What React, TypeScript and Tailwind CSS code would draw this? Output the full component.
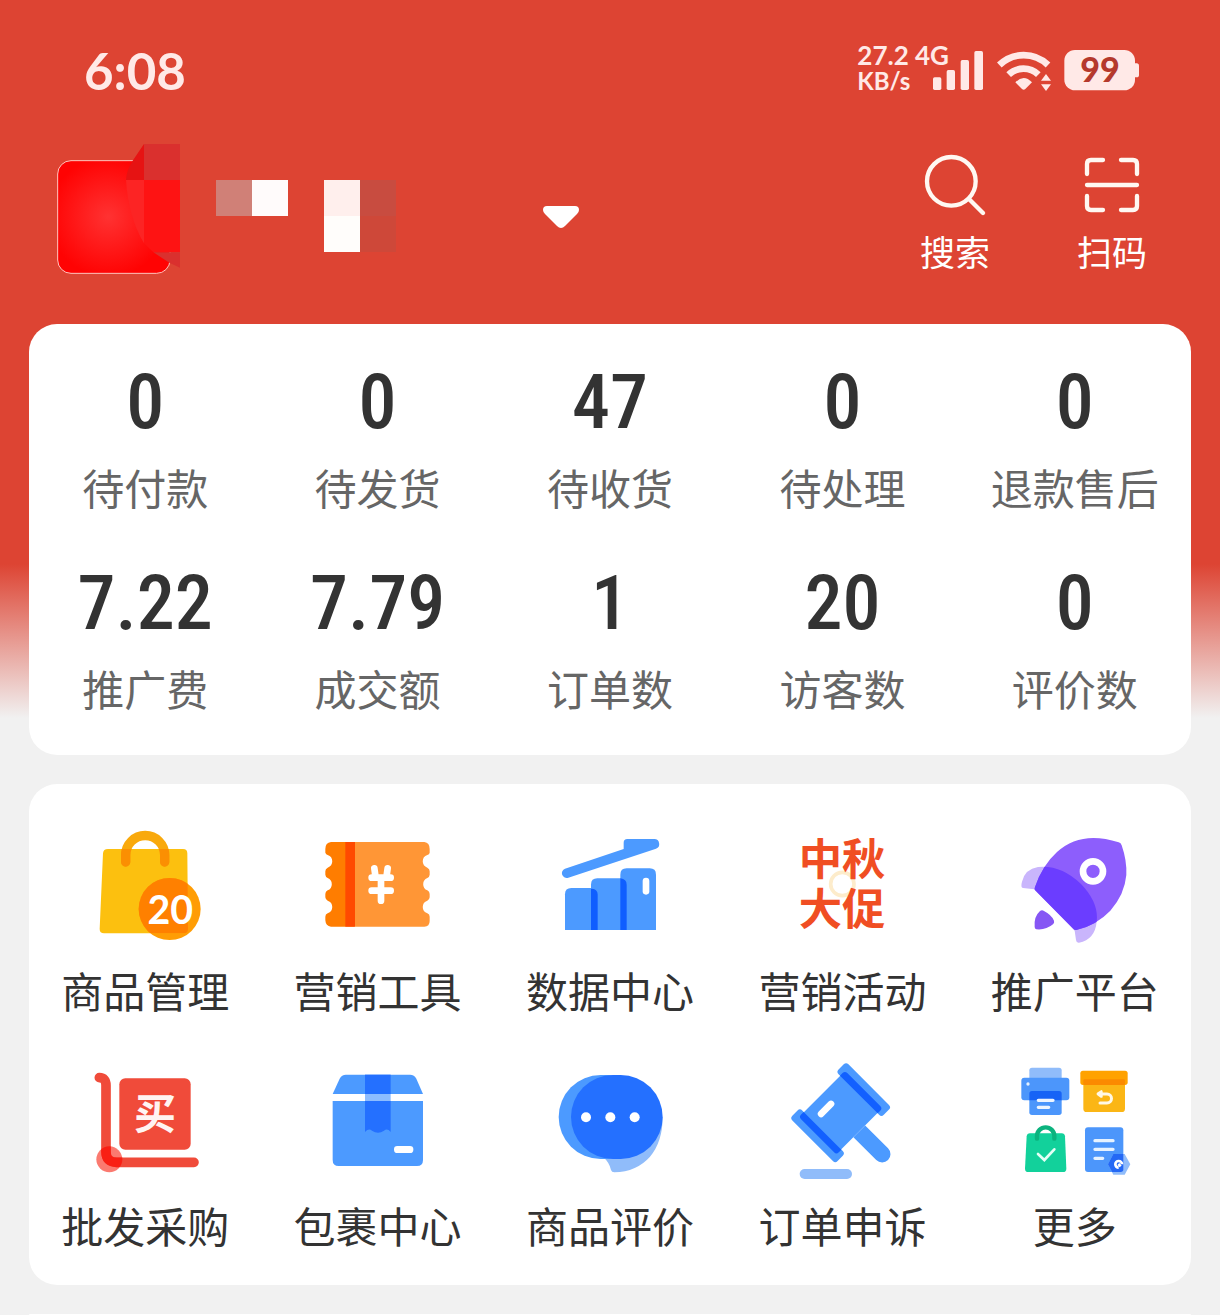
import type { ReactNode } from 'react';

interface Stat {
  value: string;
  label: string;
}

interface Tool {
  label: string;
  icon: ReactNode;
}

const stats: Stat[] = [
  { value: '0', label: '待付款' },
  { value: '0', label: '待发货' },
  { value: '47', label: '待收货' },
  { value: '0', label: '待处理' },
  { value: '0', label: '退款售后' },
  { value: '7.22', label: '推广费' },
  { value: '7.79', label: '成交额' },
  { value: '1', label: '订单数' },
  { value: '20', label: '访客数' },
  { value: '0', label: '评价数' },
];

function BagIcon() {
  const body = 'M205 117 H430 Q443 117 443 130 L445 357 Q445 370 432 370 H193 Q180 370 180 357 L190 130 Q191 117 205 117Z';
  return (
    <svg viewBox="136 48 360 360" className="size-[120px]" aria-hidden="true">
      <clipPath id="bag-body"><path d={body} /></clipPath>
      <path d={body} fill="#fcc00f" />
      <path d="M258 156 V135 a58 58 0 0 1 117 0 V156" fill="none" stroke="#f9a90c" strokeWidth="28" strokeLinecap="round" />
      <circle cx="390" cy="297" r="93" fill="#ff9d05" />
      <g clipPath="url(#bag-body)">
        <path d="M258 156 V135 a58 58 0 0 1 117 0 V156" fill="none" stroke="#fb8f02" strokeWidth="28" strokeLinecap="round" />
        <circle cx="390" cy="297" r="93" fill="#ff8000" />
      </g>
      <text x="392" y="343" textAnchor="middle" fontSize="118" className="fill-white font-[Lato] font-bold">20</text>
    </svg>
  );
}

function TicketIcon() {
  return (
    <svg viewBox="83 48 360 360" className="size-[120px]" aria-hidden="true">
      <path d="M193 96 H122 Q105 98 105 117 V128 Q107 134 112 135 A20 20 0 0 1 112 173 Q105 176 105 184 V194 Q106 202 112 204 A20 20 0 0 1 112 241 Q105 244 105 252 V262 Q106 270 112 272 A20 20 0 0 1 112 310 Q105 313 105 320 V331 Q106 348 122 350 H193Z" fill="#ff7d00" />
      <path d="M193 96 H402 Q418 98 418 117 V128 Q417 134 411 135 A20 20 0 0 0 411 173 Q418 176 418 184 V194 Q417 202 411 204 A20 20 0 0 0 411 241 Q418 244 418 252 V262 Q417 270 411 272 A20 20 0 0 0 411 310 Q418 313 418 320 V333 Q418 350 402 350 H193Z" fill="#ff9636" />
      <rect x="165" y="96" width="29" height="254" fill="#ff4a00" />
      <path d="M252 175 L256 203 M292 175 L288 203 M244 203 H301 M244 242 H301 M272 203 V272" fill="none" stroke="#fff" strokeWidth="20" strokeLinecap="round" />
    </svg>
  );
}

function ChartIcon() {
  return (
    <svg viewBox="210 48 360 360" className="size-[120px]" aria-hidden="true">
      <g fill="#4c9aff">
        <path d="M255 176 L431 117 V98 Q431 87 442 87 H523 A15 15 0 0 1 528 116 L265 203 A14 14 0 0 1 255 176Z" />
        <path d="M255 360 V253 Q255 234 274 234 H334 Q353 234 353 253 V360Z" />
        <path d="M333 360 V224 Q333 205 352 205 H421 Q440 205 440 224 V360Z" />
        <path d="M421 360 V194 Q421 175 440 175 H509 Q528 175 528 194 V360Z" />
      </g>
      <path d="M333 360 V236 Q353 236 353 253 V360Z M421 360 V205 Q440 207 440 224 V360Z" fill="#0f5eff" />
      <rect x="488" y="203" width="20" height="51" rx="10" fill="#fff" />
    </svg>
  );
}

function FestivalIcon() {
  return (
    <svg viewBox="127 48 360 360" className="size-[120px]" aria-hidden="true">
      <circle cx="308" cy="222" r="35" fill="none" stroke="#fdeccb" strokeWidth="11" />
      <g fontSize="130" className="fill-[#f04e23] font-['Noto_Sans_CJK_SC'] font-bold">
        <text x="177" y="196">中秋</text>
        <text x="177" y="345">大促</text>
      </g>
    </svg>
  );
}

function RocketIcon() {
  const hull = 'M1135 97 Q1142 99 1144 106 Q1160 152 1158 195 Q1153 253 1110 302 Q1068 346 1008 360 Q1003 361 999 356 L884 241 Q881 238 884 231 Q906 166 950 126 Q1022 60 1135 97Z';
  const fins = 'M848 234 Q840 233 845 215 Q854 177 893 171 Q962 164 1022 222 Q1076 278 1069 335 Q1064 388 1016 398 Q1008 399 1007 390 L1003 362 L882 238Z';
  return (
    <svg viewBox="824 48 360 360" className="size-[120px]" aria-hidden="true">
      <clipPath id="rocket-hull"><path d={hull} /></clipPath>
      <path d={fins} fill="#c9b5fc" />
      <path d={hull} fill="#8d5efc" />
      <path d={fins} fill="#6b3dff" clipPath="url(#rocket-hull)" />
      <circle cx="1058" cy="184" r="30" fill="#8d5efc" stroke="#fff" strokeWidth="20" />
      <path d="M899 303 Q905 299 911 303 Q934 315 941 332 Q943 338 938 343 Q917 361 888 358 Q883 357 883 351 Q880 320 899 303Z" fill="#8656f4" />
    </svg>
  );
}

function TrolleyIcon() {
  return (
    <svg viewBox="76 63 360 360" className="size-[120px]" aria-hidden="true">
      <clipPath id="trolley-wheel"><circle cx="149" cy="358" r="39" /></clipPath>
      <circle cx="149" cy="358" r="39" fill="#fb7a70" />
      <g fill="none" strokeWidth="29" strokeLinecap="round">
        <path d="M119 113 Q139 113 139 136 V335 Q139 367 171 367 H403" stroke="#f04b3a" />
        <path d="M139 300 V335 Q139 367 171 367 H220" stroke="#f91f14" clipPath="url(#trolley-wheel)" />
      </g>
      <rect x="179" y="115" width="214" height="214" rx="18" fill="#f04b3a" />
      <text x="286" y="268" textAnchor="middle" fontSize="126" className="fill-[#fff4f2] font-['Noto_Sans_CJK_SC'] font-bold">买</text>
    </svg>
  );
}

function ParcelIcon() {
  return (
    <svg viewBox="773 63 360 360" className="size-[120px]" aria-hidden="true">
      <path d="M817 162 L838 116 Q844 104 857 104 H1049 Q1062 104 1068 116 L1088 162Z" fill="#4c9aff" />
      <path d="M817 183 H1088 V360 Q1088 378 1070 378 H835 Q817 378 817 360Z" fill="#4c9aff" />
      <rect x="914" y="104" width="77" height="58" fill="#2470ff" />
      <rect x="914" y="162" width="77" height="21" fill="#8dbcff" />
      <path d="M914 183 H991 V276 Q981 264 971 272 Q953 284 935 272 Q925 264 914 276Z" fill="#2470ff" />
      <rect x="1001" y="318" width="58" height="21" rx="10" fill="#fff" />
    </svg>
  );
}

function ChatIcon() {
  return (
    <svg viewBox="90 63 360 360" className="size-[120px]" aria-hidden="true">
      <path d="M248 350 Q268 366 273 390 Q275 397 283 397 Q350 395 390 350 Q428 305 428 231 L300 300Z" fill="#90bcfa" />
      <rect x="116" y="105" width="276" height="252" rx="126" fill="#4c9aff" />
      <rect x="153" y="105" width="275" height="252" rx="126" fill="#2470ff" />
      <g fill="#fff">
        <circle cx="198" cy="232" r="15" />
        <circle cx="271" cy="232" r="15" />
        <circle cx="344" cy="232" r="15" />
      </g>
    </svg>
  );
}

function GavelIcon() {
  return (
    <svg viewBox="787 63 360 360" className="size-[120px]" aria-hidden="true">
      <g transform="translate(963 218) rotate(-45)">
        <g fill="#4c9aff">
          <rect x="-98" y="-79" width="196" height="158" rx="8" />
          <rect x="77" y="-96" width="42" height="192" rx="10" />
          <rect x="-119" y="-96" width="42" height="192" rx="10" />
          <path d="M-25 79 H25 V176 A25 25 0 0 1 -25 176Z" />
        </g>
        <path d="M77 -80 H88 Q98 -80 98 -70 V70 Q98 80 88 80 H77Z M-77 -80 H-88 Q-98 -80 -98 -70 V70 Q-98 80 -88 80 H-77Z" fill="#1260ff" />
        <rect x="-54" y="-49" width="62" height="20" rx="10" fill="#fff" />
      </g>
      <rect x="840" y="387" width="157" height="30" rx="15" fill="#90bcfa" />
    </svg>
  );
}

function MoreIcon() {
  return (
    <svg viewBox="104 63 360 360" className="size-[120px]" aria-hidden="true">
      {/* printer */}
      <rect x="147" y="83" width="97" height="50" rx="8" fill="#90bcfa" />
      <rect x="123" y="113" width="144" height="68" rx="9" fill="#4c96fb" />
      <rect x="147" y="153" width="97" height="72" rx="8" fill="#4c96fb" />
      <path d="M147 181 V161 Q147 153 155 153 H236 Q244 153 244 161 V181Z" fill="#1763f6" />
      <circle cx="143" cy="132" r="5" fill="#e4f1ff" />
      <path d="M174 181 H218 M174 202 H205" stroke="#eef5ff" strokeWidth="10" strokeLinecap="round" />
      {/* returns box */}
      <path d="M309 120 H434 V206 Q434 216 424 216 H319 Q309 216 309 206Z" fill="#fbb615" />
      <rect x="300" y="92" width="142" height="43" rx="8" fill="#ffa200" />
      <rect x="309" y="118" width="125" height="17" rx="4" fill="#fb8a00" />
      <path d="M358 162 H380 a13 13 0 0 1 0 27 H359" fill="none" stroke="#fff8e6" strokeWidth="9" strokeLinecap="round" />
      <path d="M350 158 L363 150 Q367 150 367 155 V170 Q366 175 361 173 L350 165 Q347 162 350 158Z" fill="#fff8e6" />
      {/* green bag */}
      <path d="M149 280 H244 Q253 280 254 289 L258 386 Q258 396 248 396 H144 Q134 396 134 386 L139 289 Q140 280 149 280Z" fill="#12d19b" />
      <path d="M170 296 V288 a26 26 0 0 1 52 0 V296" fill="none" stroke="#0bb37e" strokeWidth="13" strokeLinecap="round" />
      <path d="M173 342 L192 360 L222 328" fill="none" stroke="#e3fff6" strokeWidth="8" strokeLinecap="round" />
      {/* document */}
      <rect x="314" y="262" width="115" height="134" rx="9" fill="#4c96fb" />
      <path d="M344 302 H398 M344 328 H398 M344 355 H367" stroke="#e6f2ff" strokeWidth="10" strokeLinecap="round" />
      <path d="M399 342 H433 L450 373 L433 404 H399 L383 373Z" fill="#90bcfa" />
      <path d="M399 342 H429 V388 Q429 396 421 396 H395 L383 373Z" fill="#2468f5" />
      <path d="M415 383 A10 10 0 1 1 425 373 M414 372 L421 379" fill="none" stroke="#fff" strokeWidth="8" />
    </svg>
  );
}

const tools: Tool[] = [
  { label: '商品管理', icon: <BagIcon /> },
  { label: '营销工具', icon: <TicketIcon /> },
  { label: '数据中心', icon: <ChartIcon /> },
  { label: '营销活动', icon: <FestivalIcon /> },
  { label: '推广平台', icon: <RocketIcon /> },
  { label: '批发采购', icon: <TrolleyIcon /> },
  { label: '包裹中心', icon: <ParcelIcon /> },
  { label: '商品评价', icon: <ChatIcon /> },
  { label: '订单申诉', icon: <GavelIcon /> },
  { label: '更多', icon: <MoreIcon /> },
];

function StatusBar() {
  return (
    <div className="flex h-36 items-center justify-between pb-1 pl-[84px] pr-20 font-[Lato] font-bold text-[#ffe9e7]">
      <span className="text-[51px] leading-none">6:08</span>
      <div className="flex items-center">
        <div className="pb-1 text-[26px] leading-[26px]">
          <div>27.2 4G</div>
          <div className="text-[24px]">KB/s</div>
        </div>
        <svg viewBox="339 60 150 123" className="-ml-4 h-[41px] w-[50px] fill-current" aria-hidden="true">
          <rect x="339" y="142" width="25" height="38" rx="5" />
          <rect x="380" y="120" width="25" height="60" rx="5" />
          <rect x="422" y="90" width="25" height="90" rx="5" />
          <rect x="463" y="63" width="26" height="117" rx="5" />
        </svg>
        <svg viewBox="531 60 165 123" className="ml-3.5 h-[41px] w-[55px] fill-current" aria-hidden="true">
          <g fill="none" stroke="currentColor" strokeWidth="20">
            <path d="M538 105 A105 105 0 0 1 684 105" />
            <path d="M566 134 A64 64 0 0 1 655 134" />
          </g>
          <path d="M586 157 Q611 131 636 157 L616 177 Q611 182 606 177Z" />
          <path d="M678 132 L693 152 H663Z M663 163 H693 L678 183Z" />
        </svg>
        <svg viewBox="732 60 228 123" className="ml-3 h-[41px] w-[76px] overflow-visible fill-current" aria-hidden="true">
          <rect x="733" y="60" width="212" height="121" rx="32" />
          <path d="M940 100 H950 Q957 100 957 108 V134 Q957 142 950 142 H940Z" />
          <text x="840" y="157" textAnchor="middle" fontSize="102" className="fill-[#b5392c] font-black">99</text>
        </svg>
      </div>
    </div>
  );
}

function ShopSwitcher() {
  return (
    <button type="button" aria-label="切换店铺" className="flex items-start">
      <svg viewBox="81 342 1020 390" className="h-[130px] w-[340px]" aria-hidden="true">
        <radialGradient id="avatar" gradientUnits="userSpaceOnUse" cx="235" cy="560" r="180">
          <stop offset="0" stopColor="#ff3232" />
          <stop offset="1" stopColor="#ff0303" />
        </radialGradient>
        <rect x="83" y="392" width="337" height="338" rx="40" fill="url(#avatar)" stroke="#ffc4bd" strokeWidth="3" />
        <path d="M342 342 L308 392 Q290 418 288 450 H342Z" fill="#e61313" />
        <rect x="342" y="342" width="108" height="108" fill="#da302e" />
        <path d="M288 450 H342 V640 Q294 560 288 450Z" fill="#fc2424" />
        <path d="M342 450 H450 V667 H370 L342 640Z" fill="#fe1313" />
        <path d="M370 667 H450 V713 L418 698Z" fill="#da302e" />
        <rect x="558" y="450" width="108" height="108" fill="#d08077" />
        <rect x="666" y="450" width="108" height="108" fill="#fffbfb" />
        <rect x="882" y="450" width="108" height="108" fill="#ffefed" />
        <rect x="882" y="558" width="108" height="108" fill="#fffdfb" />
        <rect x="990" y="450" width="108" height="108" fill="#c84c40" />
        <rect x="990" y="558" width="108" height="108" fill="#ce4839" />
      </svg>
      <svg viewBox="0 0 36 22" className="ml-[146px] mt-[62px] h-[22px] w-9 fill-white" aria-hidden="true">
        <path d="M4 0 H32 Q36 0 36 4 Q36 6 34 8 L22 20 Q18 24 14 20 L2 8 Q0 6 0 4 Q0 0 4 0Z" />
      </svg>
    </button>
  );
}

function HeaderButton({ label, children }: { label: string; children: ReactNode }) {
  return (
    <button type="button" className="flex w-24 flex-col items-center gap-3 text-[35px] leading-[44px] text-white">
      {children}
      <span>{label}</span>
    </button>
  );
}

export default function App() {
  return (
    <div className="flex min-h-screen flex-col bg-[#f1f1f1] bg-[linear-gradient(to_bottom,#dd4433_0,#dd4433_564px,#f1f1f1_718px)] px-[29px] font-['Noto_Sans_CJK_SC',sans-serif]">
      <header className="-mx-[29px]">
        <StatusBar />
        <div className="flex items-start justify-between pb-[50px] pl-[57px] pr-[60px]">
          <ShopSwitcher />
          <div className="flex gap-[61px] pt-[9px]">
            <HeaderButton label="搜索">
              <svg viewBox="309 369 192 192" className="size-16" fill="none" stroke="#fff8f2" strokeWidth="13" strokeLinecap="round" aria-hidden="true">
                <circle cx="394" cy="454" r="73" />
                <path d="M447 507 L489 549" />
              </svg>
            </HeaderButton>
            <HeaderButton label="扫码">
              <svg viewBox="780 369 192 192" className="size-16" fill="none" stroke="#fff8f2" strokeWidth="13" strokeLinecap="round" aria-hidden="true">
                <path d="M801 432 V402 Q801 390 813 390 H849 M903 390 H939 Q951 390 951 402 V432 M951 498 V528 Q951 540 939 540 H903 M849 540 H813 Q801 540 801 528 V498 M801 465 H951" />
              </svg>
            </HeaderButton>
          </div>
        </div>
      </header>

      <main className="flex flex-1 flex-col gap-[29px]">
        {/* Order and traffic counters */}
        <section className="grid grid-cols-5 gap-y-[52px] rounded-[28px] bg-white pb-[39px] pt-[42px]">
          {stats.map((stat) => (
            <button key={stat.label} type="button" className="flex flex-col items-center gap-[21px] whitespace-nowrap">
              <span className="font-['Roboto_Condensed',Roboto,sans-serif] text-[76px] font-medium leading-[72px] text-[#333333]">
                {stat.value}
              </span>
              <span className="text-[42px] leading-[56px] text-[#666666]">{stat.label}</span>
            </button>
          ))}
        </section>

        {/* Tool shortcuts */}
        <section className="grid grid-cols-5 gap-y-[43px] rounded-[28px] bg-white pb-8 pt-[42px]">
          {tools.map((tool) => (
            <button key={tool.label} type="button" className="flex flex-col items-center gap-4 whitespace-nowrap">
              {tool.icon}
              <span className="text-[42px] leading-[56px] text-[#333333]">{tool.label}</span>
            </button>
          ))}
        </section>

        <section className="flex-1 rounded-t-[28px] bg-white" />
      </main>
    </div>
  );
}
